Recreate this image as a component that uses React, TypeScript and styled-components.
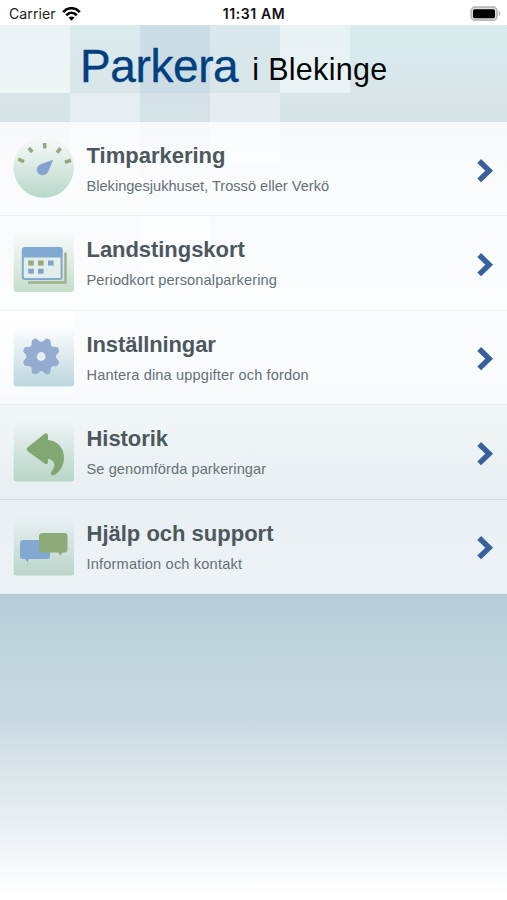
import React from "react";
import styled, { createGlobalStyle } from "styled-components";

const GlobalStyle = createGlobalStyle`
  * { box-sizing: border-box; }
  body { margin: 0; background: #fff; font-family: "Liberation Sans", Arial, sans-serif; }
`;

const Screen = styled.main`
  width: 507px;
  height: 900px;
  display: flex;
  flex-direction: column;
  overflow: hidden;
  background: #fff;
`;

const StatusBar = styled.div`
  height: 25px;
  display: grid;
  grid-template-columns: 1fr auto 1fr;
  align-items: center;
  padding: 2px 6px 0 9px;
  font-family: Inter, sans-serif;
  color: #222;
`;

const Carrier = styled.div`
  display: flex;
  align-items: center;
  gap: 6px;
  font-size: 14.2px;
`;

const Clock = styled.div`
  font-weight: 600;
  font-size: 14px;
  letter-spacing: 0.6px;
  margin-right: 2px;
  color: #111;
`;

const Battery = styled.svg`
  justify-self: end;
`;

const tile = (from: string, to: string) => `linear-gradient(${from}, ${to})`;

const Header = styled.header`
  height: 97px;
  display: flex;
  align-items: flex-start;
  padding: 14px 0 0 80px;
  background-image:
    ${tile("#e9f2f5", "#eef6f7")},
    ${tile("#daebee", "#d9e5e9")},
    ${tile("#cdddE6", "#ccdce4")},
    ${tile("#d9e9ed", "#d9e5e9")},
    ${tile("#e8f2f4", "#eaf3f5")},
    ${tile("#e5edf2", "#e4edf2")},
    ${tile("#d4e1e7", "#d5e3e7")},
    ${tile("#e5edf3", "#e4ecf1")},
    linear-gradient(#daebee, #d9eaee 30%, #d8e4e8 75%, #d7e4e7);
  background-repeat: no-repeat;
  background-size: 70px 68px, 70px 68px, 70px 68px, 70px 68px, 70px 68px,
    70px 29px, 70px 29px, 70px 29px, 100% 100%;
  background-position: 0 0, 70px 0, 140px 0, 210px 0, 280px 0,
    70px 68px, 140px 68px, 210px 68px, 0 0;
`;

const Brand = styled.span`
  font-size: 46px;
  line-height: 54px;
  letter-spacing: -0.4px;
  color: #00407f;
  -webkit-text-stroke: 0.35px #00407f;
`;

const Region = styled.span`
  margin-left: 14px;
  padding-top: 13px;
  font-size: 30.5px;
  line-height: 35px;
  letter-spacing: 0.3px;
  color: #050505;
`;

const Menu = styled.nav`
  display: flex;
  flex-direction: column;
  height: 472px;
`;

const Row = styled.a<{ $top: string; $bottom: string; $line: string; $tiles?: string }>`
  flex: 1;
  display: grid;
  grid-template-columns: 60px 1fr 18px;
  column-gap: 13.5px;
  padding: 0 12px 0 13px;
  border-bottom: 1px solid ${(p) => p.$line};
  background: ${(p) => (p.$tiles ? `${p.$tiles}, ` : "")}linear-gradient(${(p) => p.$top}, ${(p) => p.$bottom});
  text-decoration: none;
`;

const IconSlot = styled.svg`
  width: 62px;
  height: 62px;
  margin-top: 15px;
`;

const Copy = styled.div`
  padding-top: 20px;
`;

const Title = styled.div<{ $track: number }>`
  font-size: 22px;
  line-height: 27px;
  font-weight: 700;
  letter-spacing: ${(p) => p.$track}px;
  color: #4d585d;
  white-space: nowrap;
`;

const Detail = styled.div<{ $track: number }>`
  margin-top: 8px;
  font-size: 14.6px;
  line-height: 18px;
  letter-spacing: ${(p) => p.$track}px;
  color: #657178;
  white-space: nowrap;
`;

const Chevron = styled.svg`
  width: 18px;
  height: 26px;
  margin-top: 35.5px;
`;

const Footer = styled.div`
  flex: 1;
  background: linear-gradient(#b5ced6 0, #b9ced9 3%, #c3d6df 26%, #cadae2 42%, #dae5ea 58%, #e7eef3 73%, #f6f8fa 88%, #fff 98%);
`;

const Tint = ({ id, color }: { id: string; color: string }) => (
  <defs>
    <linearGradient id={id} x1="0" y1="0" x2="0" y2="1">
      <stop offset="0.02" stopColor={color} stopOpacity="0" />
      <stop offset="1" stopColor={color} />
    </linearGradient>
  </defs>
);

const GaugeIcon = () => (
  <IconSlot viewBox="0 0 62 62">
    <Tint id="gauge" color="#b8d7c7" />
    <circle cx="30.7" cy="30.5" r="30.3" fill="url(#gauge)" />
    <g stroke="#96a77c" strokeWidth="3.6">
      <path d="M31.7 6v5.6M15.8 10.8l3.4 4.4M47.6 11.2l-3.6 4.4M5.2 22.2l5.8 2.4M57.9 23.2l-6 2.2" />
    </g>
    <path d="M39.8 23.2L27.5 27.6C21.5 30.5 24 38.5 30 38 33 37.7 34.4 36 35.2 34Z" fill="#84a2cf" stroke="#84a2cf" strokeWidth="0.5" strokeLinejoin="round" />
  </IconSlot>
);

const CalendarIcon = () => (
  <IconSlot viewBox="0 0 62 62">
    <Tint id="calendar" color="#c5ddca" />
    <rect x="0.7" y="0" width="60.3" height="61" rx="3" fill="url(#calendar)" />
    <path d="M52.5 21.5V51.5H15" fill="none" stroke="#9eb08c" strokeWidth="2.4" />
    <rect x="9.8" y="18" width="38.8" height="30" rx="2" fill="#e4eee9" stroke="#81a8d0" strokeWidth="2" />
    <path d="M9 26.5V18.5q0-2.5 2.5-2.5h35.5q2.5 0 2.5 2.5v8Z" fill="#81a8d0" />
    <path d="M15.2 29.5h5.6v5h-5.6ZM25 29.5h5.6v5h-5.6Z" fill="#94a980" />
    <path d="M35 29.5h5.6v5h-5.6ZM15.2 37.7h5.6v5h-5.6ZM25 37.7h5.6v5h-5.6Z" fill="#7fa1cd" />
  </IconSlot>
);

const GearIcon = () => (
  <IconSlot viewBox="0 0 62 62">
    <Tint id="gear" color="#bdd5de" />
    <rect x="0.7" y="0" width="60.3" height="60.5" rx="3" fill="url(#gear)" />
    <g transform="translate(28.2 30.5)" fill="#94acd0">
      <circle r="14.8" />
      {[22.5, 67.5, 112.5, 157.5, 202.5, 247.5, 292.5, 337.5].map((angle) => (
        <path key={angle} transform={`rotate(${angle})`} d="M-5.2 -13L-2.9 -17.6Q-2.2 -19 0 -19Q2.2 -19 2.9 -17.6L5.2 -13Z" />
      ))}
      <circle r="4.4" fill="#e5eff2" />
    </g>
  </IconSlot>
);

const ReturnIcon = () => (
  <IconSlot viewBox="0 0 62 62">
    <Tint id="return" color="#b8d5c7" />
    <rect x="0.7" y="0.5" width="60.3" height="61" rx="3" fill="url(#return)" />
    <path
      d="M15 27L31 14.2Q34 12 35 15V20C44 20.5 51 28 51 37 51 46 46.8 52 41.5 55 38.2 56 36.8 53.4 38.7 51.2 41 48.4 42.2 45 40.5 42 39.2 40 37 39 35 39V42.5Q34 45 31.5 43.5L15 31.5Q12.5 29.2 15 27Z"
      fill="#82a771"
    />
  </IconSlot>
);

const ChatIcon = () => (
  <IconSlot viewBox="0 0 62 62">
    <Tint id="chat" color="#bad4c8" />
    <rect x="0.7" y="0" width="60.3" height="60.5" rx="3" fill="url(#chat)" />
    <path d="M11 25H34q3 0 3 3V41q0 3-3 3H16L14.5 47.5 12 44H10q-3 0-3-3V28q0-3 4-3Z" fill="#83a8d2" />
    <path d="M30 18H51.5q3 0 3 3V34.5q0 3-3 3H49L47.5 40.5 45 37.5H29q-3 0-3-3V21q0-3 4-3Z" fill="#8cab79" />
  </IconSlot>
);

const items = [
  {
    icon: <GaugeIcon />, title: "Timparkering", detail: "Blekingesjukhuset, Trossö eller Verkö",
    top: "#f6f8f9", bottom: "#fafcfd", line: "#eaeff1", track: 0, detailTrack: 0,
    tiles: "linear-gradient(#fafbfc, #fbfdfd) 70px 0 / 70px 100% no-repeat, linear-gradient(#fafbfc, #fcfdfe) 210px 0 / 70px 43px no-repeat",
  },
  {
    icon: <CalendarIcon />, title: "Landstingskort", detail: "Periodkort personalparkering",
    top: "#f8fafb", bottom: "#fbfdfe", line: "#f1f5f7", track: -0.05, detailTrack: 0.11,
    tiles: "linear-gradient(#fcfdfd, #fbfdfe) 140px 0 / 70px 100% no-repeat",
  },
  {
    icon: <GearIcon />, title: "Inställningar", detail: "Hantera dina uppgifter och fordon",
    top: "#fbfcfe", bottom: "#f7fafb", line: "#e8eff2", track: -0.12, detailTrack: 0.15,
    tiles: "linear-gradient(#ffffff, rgba(255,255,255,0)) 0 0 / 73px 100% no-repeat",
  },
  {
    icon: <ReturnIcon />, title: "Historik", detail: "Se genomförda parkeringar",
    top: "#f2f6f9", bottom: "#e8eff1", line: "#d5e0e4", track: -0.05, detailTrack: 0.08,
  },
  {
    icon: <ChatIcon />, title: "Hjälp och support", detail: "Information och kontakt",
    top: "#e8f0f2", bottom: "#eef2f8", line: "#e5edf1", track: 0, detailTrack: 0.17,
  },
];

export default function App() {
  return (
    <>
      <GlobalStyle />
      <Screen>
        <StatusBar>
          <Carrier>
            Carrier
            <svg width="19" height="14" viewBox="0 0 19 14" fill="none" stroke="#000" strokeWidth="2.7">
              <path d="M1.2 5.1C6-.1 13 .0 17.8 5.1M4.2 8.2c3.2-3.1 7.4-3.1 10.6 0" />
              <path d="M6.5 10.6q3-2.3 6 0L9.5 13.7Z" fill="#000" stroke="none" />
            </svg>
          </Carrier>
          <Clock>11:31 AM</Clock>
          <Battery width="31" height="16" viewBox="0 0 31 16">
            <rect x="1.2" y="1.2" width="25.8" height="13" rx="4" fill="#e2e2e2" stroke="#b8b8b8" strokeWidth="1.8" />
            <rect x="3" y="3.2" width="22" height="9" rx="1.8" fill="#000" />
            <path d="M29 5.3q2.4 2.2 0 4.4Z" fill="#b4b4b4" stroke="#b4b4b4" strokeWidth="0.6" />
          </Battery>
        </StatusBar>
        <Header>
          <Brand>Parkera</Brand>
          <Region>i Blekinge</Region>
        </Header>
        <Menu>
          {items.map((item) => (
            <Row key={item.title} $top={item.top} $bottom={item.bottom} $line={item.line} $tiles={item.tiles}>
              {item.icon}
              <Copy>
                <Title $track={item.track}>{item.title}</Title>
                <Detail $track={item.detailTrack}>{item.detail}</Detail>
              </Copy>
              <Chevron viewBox="0 0 18 26" fill="none" stroke="#37619a" strokeWidth="5.4">
                <path d="M2.2 3L12.2 12.7 2.2 22.4" />
              </Chevron>
            </Row>
          ))}
        </Menu>
        <Footer />
      </Screen>
    </>
  );
}
